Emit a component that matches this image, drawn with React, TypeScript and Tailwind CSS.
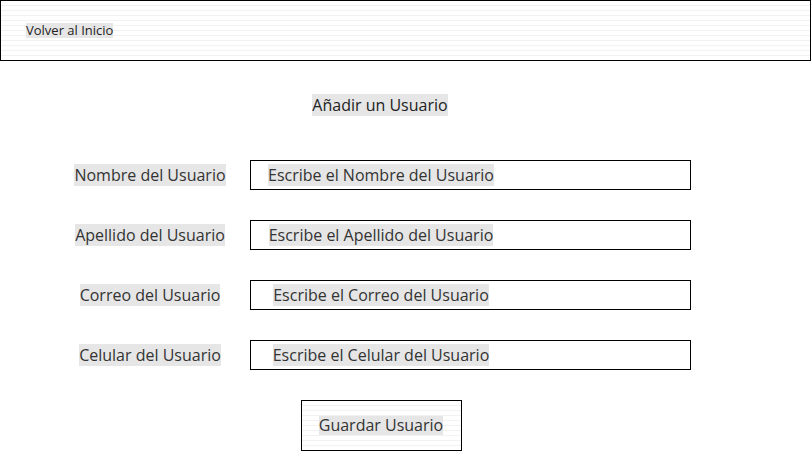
import React from 'react';

const fields = [
    { label: 'Nombre del Usuario', placeholder: 'Escribe el Nombre del Usuario' },
    { label: 'Apellido del Usuario', placeholder: 'Escribe el Apellido del Usuario' },
    { label: 'Correo del Usuario', placeholder: 'Escribe el Correo del Usuario' },
    { label: 'Celular del Usuario', placeholder: 'Escribe el Celular del Usuario' },
];

const stripes =
    'bg-[image:repeating-linear-gradient(to_bottom,#ffffff_0px,#ffffff_4px,#f2f2f2_4px,#f2f2f2_5px)]';

export default function App() {
    return (
        <div className="min-h-screen w-[811px] bg-white font-['Open_Sans',sans-serif] text-[#333]">
            {/* Header */}
            <div className={`flex h-[61px] items-center border border-black pl-[25px] ${stripes}`}>
                <span className="bg-[#e6e6e6] text-[13px] leading-[15px] text-[#222]">Volver al Inicio</span>
            </div>

            {/* Title */}
            <div className="mt-[32px] w-[760px] text-center">
                <span className="bg-[#e6e6e6] text-[16px] leading-[18px] text-[#222]">Añadir un Usuario</span>
            </div>

            {/* Form */}
            <div className="mt-[43px] flex flex-col gap-[30px]">
                {fields.map((f) => (
                    <div key={f.label} className="flex h-[30px] items-center">
                        <div className="w-[250px] pl-[50px] text-center">
                            <span className="bg-[#e6e6e6] text-[16px] leading-[18px]">{f.label}</span>
                        </div>
                        <div className="flex h-[30px] w-[441px] items-center border border-black">
                            <div className="w-[260px] text-center">
                                <span className="bg-[#e6e6e6] text-[16px] leading-[18px]">{f.placeholder}</span>
                            </div>
                        </div>
                    </div>
                ))}
            </div>

            {/* Save */}
            <div className="mt-[30px] flex w-[762px] justify-center">
                <button className={`flex h-[51px] w-[161px] items-center justify-center border border-black ${stripes}`}>
                    <span className="bg-[#e6e6e6] text-[16px] leading-[19px]">Guardar Usuario</span>
                </button>
            </div>
        </div>
    );
}
